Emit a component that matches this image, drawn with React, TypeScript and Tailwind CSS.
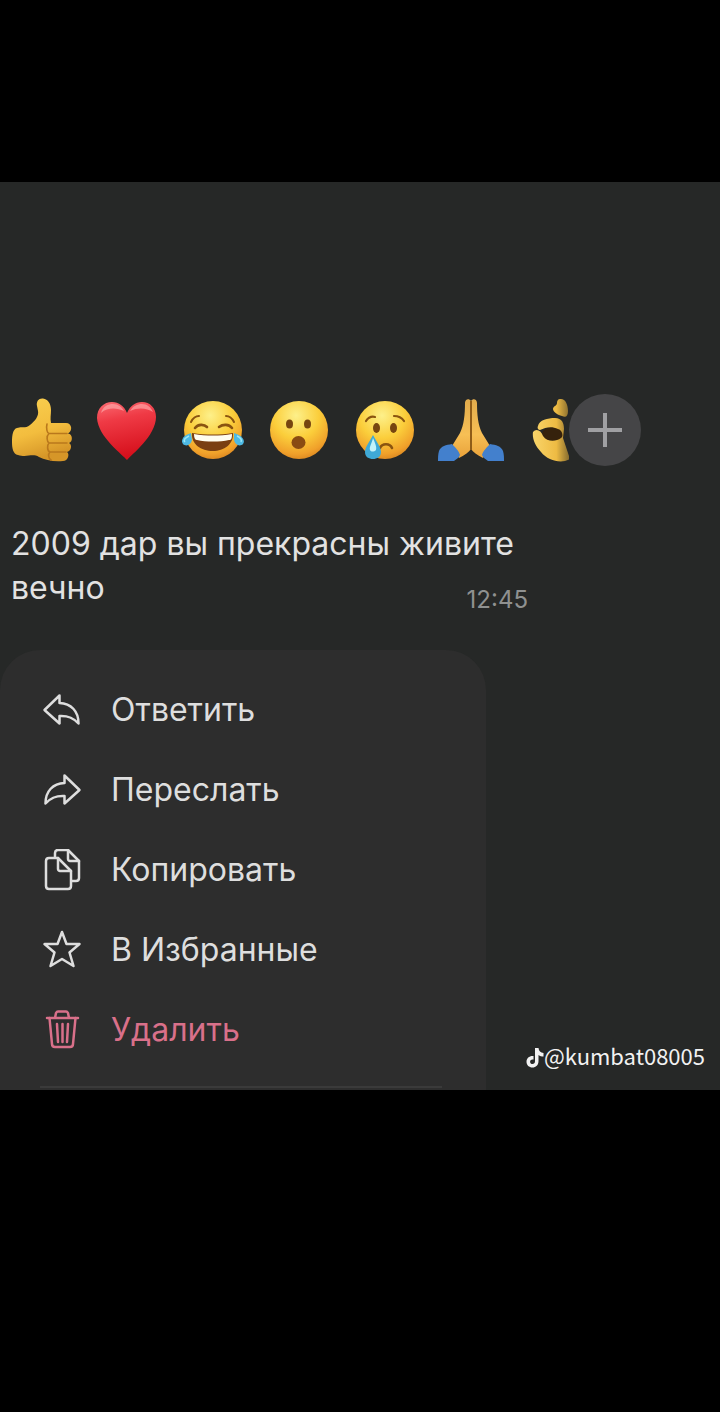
import type { ReactNode } from "react";

const FaceGradient = ({ id }: { id: string }) => (
  <defs>
    <radialGradient id={id} cx="45%" cy="25%" r="78%">
      <stop offset="0%" stopColor="#fdf08a" />
      <stop offset="50%" stopColor="#fbce3b" />
      <stop offset="85%" stopColor="#f0a02a" />
      <stop offset="100%" stopColor="#d98520" />
    </radialGradient>
  </defs>
);

const ThumbsUp = () => (
  <svg viewBox="0 0 64 64" className="size-16">
    <defs>
      <linearGradient id="thumb" x1="0" y1="0" x2="0.3" y2="1">
        <stop offset="0%" stopColor="#f9d050" />
        <stop offset="60%" stopColor="#f3bd3e" />
        <stop offset="100%" stopColor="#d69628" />
      </linearGradient>
    </defs>
    <path
      d="M27 8C26 3 29 0 33 0.5C38 1 41 6 41 12C41 17 40 20 41 25L56 25C62 25 63 33 58 35.5C63 36 63 44 59 45C62 46 62 53 57 54C60 56 58 63 53 63C44 64 35 62 29 59C22 55 17 60 8 57C3 56 2 50 2 44C2 37 3 31 7 30C12 28 15 31 20 27C25 23 29 18 28 13Z"
      fill="url(#thumb)"
    />
    <path
      d="M37 26C36 30 37 35 39 35.5H57M39 35.5C36 38 37 44 39 45H57M39 45C37 47 37 53 40 54H56M40 54C38 56 38 60 41 62"
      fill="none"
      stroke="#b9781c"
      strokeWidth="1.6"
      strokeLinecap="round"
    />
  </svg>
);

const Heart = () => (
  <svg viewBox="0 0 64 64" className="size-16">
    <defs>
      <linearGradient id="heart" x1="0" y1="0" x2="0.2" y2="1">
        <stop offset="0%" stopColor="#fb6b72" />
        <stop offset="35%" stopColor="#ef3a45" />
        <stop offset="100%" stopColor="#d6101c" />
      </linearGradient>
    </defs>
    <path
      d="M31 62C27 57 2 39 1 20C1 10 8 4 16 4C23 4 28 8 31 15C34 8 39 4 46 4C54 4 60 10 60 19C60 38 35 57 31 62Z"
      fill="url(#heart)"
    />
    <path d="M5 15C7 8 12 6 17 6C22 6 26 9 28 13C21 10 12 9 5 15Z" fill="#ffb3b3" opacity="0.6" />
    <path d="M34 13C37 8 41 6 46 6C51 6 55 9 57 14C51 10 42 9 34 13Z" fill="#ffb3b3" opacity="0.6" />
  </svg>
);

const Joy = () => (
  <svg viewBox="0 0 64 64" className="size-16">
    <FaceGradient id="joy" />
    <circle cx="31" cy="32" r="29" fill="url(#joy)" />
    <g fill="none" stroke="#8a5410" strokeLinecap="round">
      <path d="M9 24C11 20 14 18 17 18M44 18C48 18 50 20 52 24" strokeWidth="2" />
      <path d="M13 30C16 26 22 26 25 29M37 29C41 26 47 26 50 30" strokeWidth="2.6" />
    </g>
    <path d="M10 35C24 37 38 37 51 35C52 46 42 53 31 53C19 53 9 46 10 35Z" fill="#7a3f12" />
    <path d="M12 36C24 38 38 38 50 36C50 41 49 42 47 42C38 44 24 44 15 42C13 42 12 40 12 36Z" fill="#fffdf0" />
    <path d="M9 35C2 37 -2 42 1 46C4 49 9 47 10 42Z" fill="#4db9e3" />
    <path d="M52 35C59 37 64 42 61 46C58 49 53 47 52 42Z" fill="#4db9e3" />
    <path d="M7 38C3 40 1 42 3 44M55 38C59 40 60 42 59 44" fill="none" stroke="#9ce6f7" strokeWidth="1.5" />
  </svg>
);

const Surprised = () => (
  <svg viewBox="0 0 64 64" className="size-16">
    <FaceGradient id="surprised" />
    <circle cx="31" cy="32" r="29" fill="url(#surprised)" />
    <ellipse cx="21.5" cy="26" rx="3.5" ry="4.5" fill="#774510" />
    <ellipse cx="39.5" cy="26" rx="3.5" ry="4.5" fill="#774510" />
    <ellipse cx="30.5" cy="44.5" rx="7" ry="6.5" fill="#8a4b12" />
  </svg>
);

const Crying = () => (
  <svg viewBox="0 0 64 64" className="size-16">
    <FaceGradient id="crying" />
    <circle cx="31" cy="32" r="29" fill="url(#crying)" />
    <ellipse cx="22.5" cy="30" rx="3.5" ry="5" fill="#774510" />
    <ellipse cx="39.5" cy="30" rx="3.5" ry="5" fill="#774510" />
    <g fill="none" stroke="#8a5410" strokeWidth="2.2" strokeLinecap="round">
      <path d="M12 23C14 20 17 18 21 19M40 18C45 18 48 20 50 23" />
      <path d="M26 50C28 45 36 45 38 50" strokeWidth="2.6" />
    </g>
    <path d="M19 37C22 43 27 49 27 54C27 59 23 61 19 61C15 61 11 59 11 54C11 49 16 43 19 37Z" fill="#3fa9d6" />
    <path d="M19 40C21 45 23 49 22 52C20 54 17 54 16 52C15 49 18 45 19 40Z" fill="#c3f2fa" />
  </svg>
);

const Pray = () => (
  <svg viewBox="1 0 64 64" className="size-16 overflow-visible">
    <defs>
      <linearGradient id="pray" x1="0" y1="0" x2="0" y2="1">
        <stop offset="0%" stopColor="#e2ac4c" />
        <stop offset="60%" stopColor="#f7bf55" />
        <stop offset="100%" stopColor="#e9a23a" />
      </linearGradient>
    </defs>
    <path
      d="M32 3C30 0 26 1 26 5C26 16 25 27 21 35L13 48L20 60C26 57 30 54 32 51C34 54 38 57 44 60L51 48L43 35C39 27 38 16 38 5C38 1 34 0 32 3Z"
      fill="url(#pray)"
    />
    <path d="M32 3V52" fill="none" stroke="#8f5c18" strokeWidth="2" />
    <path d="M13 46C7 47 2 48 0 53C-1 56 -1 60 -1 63L15 63C17 61 20 60 21 57C20 53 16 49 13 46Z" fill="#4380cd" />
    <path d="M51 46C57 47 62 48 64 53C65 56 65 60 65 63L49 63C47 61 44 60 43 57C44 53 48 49 51 46Z" fill="#4380cd" />
  </svg>
);

const OkHand = () => (
  <svg viewBox="0 0 64 64" className="size-16">
    <defs>
      <linearGradient id="ok" gradientUnits="userSpaceOnUse" x1="7" y1="0" x2="46" y2="0">
        <stop offset="0%" stopColor="#f9d56a" />
        <stop offset="60%" stopColor="#eebb43" />
        <stop offset="100%" stopColor="#6f5a2a" />
      </linearGradient>
    </defs>
    <path d="M34 1C39 0 42 6 42 13C42 18 40 20 36 18C32 17 27 14 27 11C27 8 31 8 31 5C31 3 32 1 34 1Z" fill="url(#ok)" />
    <ellipse cx="27" cy="36" rx="11" ry="7" fill="#35220c" />
    <path
      d="M12 28C13 22 22 20 29 20C36 20 38 25 38 31L37 40L44 61C36 66 22 63 15 54C9 48 6 40 7 34C10 30 15 32 17 38C21 44 30 44 35 40C38 38 36 32 32 31C26 28 20 29 14 32C12 32 11 30 12 28Z"
      fill="url(#ok)"
    />
  </svg>
);

const reactions = [
  { label: "Нравится", icon: <ThumbsUp /> },
  { label: "Сердце", icon: <Heart /> },
  { label: "Смех", icon: <Joy /> },
  { label: "Удивление", icon: <Surprised /> },
  { label: "Грусть", icon: <Crying /> },
  { label: "Спасибо", icon: <Pray /> },
  { label: "Окей", icon: <OkHand /> },
];

const MenuIcon = ({ children }: { children: ReactNode }) => (
  <svg
    viewBox="0 0 42 42"
    className="size-[42px] shrink-0"
    fill="none"
    stroke="currentColor"
    strokeWidth="2.5"
    strokeLinecap="round"
    strokeLinejoin="round"
  >
    {children}
  </svg>
);

const ARROW = "M18.5 6.5L3.5 21L18.5 34.5V27C27 26.5 32 28.5 37.5 34.5C37.5 22 30 14.5 18.5 14Z";

const menuItems = [
  { label: "Ответить", icon: <path d={ARROW} /> },
  { label: "Переслать", icon: <path d={ARROW} transform="translate(42 0) scale(-1 1)" /> },
  {
    label: "Копировать",
    icon: (
      <>
        <path d="M8 9H17L30 22V37C30 39 29 40 27 40H8C6 40 5 39 5 37V12C5 10 6 9 8 9Z" />
        <path d="M17 9V20C17 21 18 22 19 22H30" />
        <path d="M14 8V4C14 2 15 1 17 1H27L38 12V29C38 31 37 32 35 32H31" />
        <path d="M27 1V10C27 11 28 12 29 12H38" />
      </>
    ),
  },
  {
    label: "В Избранные",
    icon: <path d="M21 3L25.5 15H38.5L28.5 23.5L32.5 37L21 30L9.5 37L13.5 23.5L3.5 15H16.5Z" />,
  },
  {
    label: "Удалить",
    danger: true,
    icon: (
      <>
        <path d="M6 9H37M14 9L15 4C15.5 3 16 2.5 17 2.5H25C26 2.5 26.5 3 27 4L28 9" />
        <path d="M8.5 9L11 35C11 37 12 38 14 38H29C31 38 32 37 32 35L34.5 9" />
        <path d="M16 15L17 33M21.5 15V33M27 15L26 33" />
      </>
    ),
  },
];

const TikTokNote = () => (
  <svg viewBox="0 0 18 22" className="h-[22px] w-[18px]" fill="currentColor">
    <path d="M9 0H12.5C12.8 3 14.5 4.7 17.5 5V8.5C15.6 8.5 14 8 12.5 7V13C12.5 17.2 9.8 19.5 6.5 19.5C3 19.5 0.5 17 0.5 13.7C0.5 10 3.6 7.5 7.5 8V11.6C5.4 11.1 4.1 12.2 4.1 13.7C4.1 15.1 5.2 16 6.5 16C8 16 9 15 9 13.2Z" />
  </svg>
);

export default function App() {
  return (
    <div className="min-h-screen bg-black pt-[182px] font-['Inter','Liberation_Sans',sans-serif]">
      <main className="relative overflow-hidden bg-[#262827] pt-[212px]">
        {/* Reactions */}
        <div className="flex items-center pl-[10px]">
          <div className="flex w-[559px] gap-[22px] overflow-hidden">
            {reactions.map((r) => (
              <button key={r.label} type="button" aria-label={r.label} className="shrink-0">
                {r.icon}
              </button>
            ))}
          </div>
          <button
            type="button"
            aria-label="Ещё реакции"
            className="flex size-[72px] shrink-0 items-center justify-center rounded-full bg-[#454547] text-[#a0a0a3]"
          >
            <svg viewBox="0 0 36 36" className="size-9" stroke="currentColor" strokeWidth="4">
              <path d="M18 1V35M1 18H35" />
            </svg>
          </button>
        </div>

        {/* Message */}
        <div className="mt-14 w-[528px] pl-[11px] text-[32px] leading-[44px] text-[#e2e2e2]">
          <p>2009 дар вы прекрасны живите</p>
          <div className="flex items-start justify-between">
            <p>вечно</p>
            <time className="mt-5 text-2xl leading-7 text-[#8f9190]">12:45</time>
          </div>
        </div>

        {/* Context menu */}
        <div className="mt-9 w-[486px] rounded-t-[40px] bg-[#2d2d2d] pt-5">
          {menuItems.map((item) => (
            <button
              key={item.label}
              type="button"
              className={`flex h-20 w-full items-center gap-7 pl-[41px] text-[32px] ${
                item.danger ? "text-[#d9708a]" : "text-[#dedede]"
              }`}
            >
              <MenuIcon>{item.icon}</MenuIcon>
              <span>{item.label}</span>
            </button>
          ))}
          <div className="mr-11 ml-10 mt-4 h-1 border-t-2 border-[#3a3a3a]" />
        </div>

        <a
          href="#kumbat08005"
          className="absolute right-[15px] bottom-5 flex items-end font-['Noto_Sans_CJK_SC',sans-serif] text-[22px] leading-[30px] text-[#f2f2f2]"
        >
          <TikTokNote />
          <span>@kumbat08005</span>
        </a>
      </main>
    </div>
  );
}
